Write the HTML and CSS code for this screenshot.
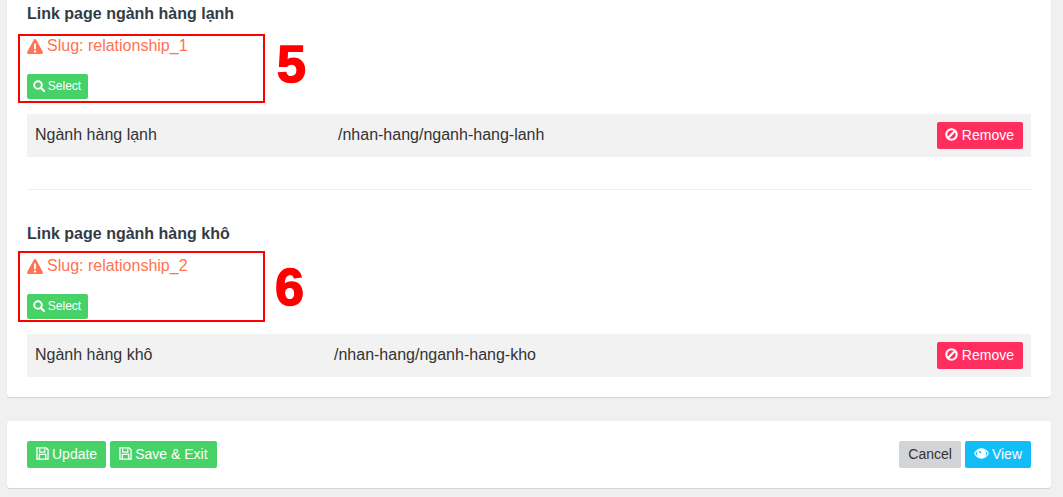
FILE: index.html
```html
<!DOCTYPE html>
<html lang="vi">
<head>
  <meta charset="UTF-8">
  <title>Link page</title>
  <link rel="stylesheet" href="styles.css">
</head>
<body>
  <svg class="icon-defs" width="0" height="0" aria-hidden="true">
    <symbol id="i-warn" viewBox="0 0 16 15"><path d="M8 0c.5 0 1 .3 1.200.7l6.600 12.200c.5.900-.1 2-1.100 2H1.300c-1 0-1.600-1.100-1.100-2L6.800.7C7 .3 7.500 0 8 0zM6.900 4.500l.2 5.700h1.800l.2-5.700H6.900zM8 11.200a1.200 1.200 0 1 0 0 2.400 1.200 1.200 0 0 0 0-2.400z" fill-rule="evenodd" fill="currentColor"/></symbol>
    <symbol id="i-search" viewBox="0 0 12 12"><circle cx="5" cy="5" r="3.800" fill="none" stroke="currentColor" stroke-width="1.900"/><path d="M7.800 7.800 11 11" stroke="currentColor" stroke-width="2.300" stroke-linecap="round"/></symbol>
    <symbol id="i-ban" viewBox="0 0 14 14"><circle cx="7" cy="7" r="5.600" fill="none" stroke="currentColor" stroke-width="2.200"/><path d="M3 11 11 3" stroke="currentColor" stroke-width="2.200"/></symbol>
    <symbol id="i-save" viewBox="0 0 14 14"><path d="M1 1h10l2 2v10H1z" fill="none" stroke="currentColor" stroke-width="1.400"/><path d="M4 1.500v4h5.500v-4" fill="none" stroke="currentColor" stroke-width="1.300"/><path d="M3.500 13V8h7v5" fill="none" stroke="currentColor" stroke-width="1.300"/></symbol>
    <symbol id="i-eye" viewBox="0 0 16 11"><path d="M8 0C4.500 0 1.700 2.200 0 5.500 1.700 8.800 4.500 11 8 11s6.300-2.200 8-5.500C14.300 2.200 11.500 0 8 0zM1.600 5.500C2.500 4 3.700 2.800 5.100 2.100a3.900 3.900 0 0 0 0 6.800C3.700 8.200 2.500 7 1.600 5.500zm9.300-3.400c1.400.7 2.600 1.900 3.500 3.400-.9 1.500-2.100 2.700-3.500 3.400a3.900 3.900 0 0 0 0-6.800zM6.600 2.700a1.200 1.200 0 1 1 0 2.400 1.200 1.200 0 0 1 0-2.400z" fill-rule="evenodd" fill="currentColor"/></symbol>
  </svg>

  <div class="page">
    <div class="card card-main">
      <section class="group">
        <h4 class="group-title">Link page ngành hàng lạnh</h4>
        <p class="slug"><svg class="ico ico-warn"><use href="#i-warn"/></svg> Slug: relationship_1</p>
        <button class="btn btn-green btn-sm"><svg class="ico ico-sm"><use href="#i-search"/></svg> Select</button>
        <div class="link-row link-row-a">
          <span>Ngành hàng lạnh</span>
          <span>/nhan-hang/nganh-hang-lanh</span>
          <button class="btn btn-red"><svg class="ico"><use href="#i-ban"/></svg> Remove</button>
        </div>
      </section>

      <hr class="divider">

      <section class="group">
        <h4 class="group-title">Link page ngành hàng khô</h4>
        <p class="slug"><svg class="ico ico-warn"><use href="#i-warn"/></svg> Slug: relationship_2</p>
        <button class="btn btn-green btn-sm"><svg class="ico ico-sm"><use href="#i-search"/></svg> Select</button>
        <div class="link-row link-row-b">
          <span>Ngành hàng khô</span>
          <span>/nhan-hang/nganh-hang-kho</span>
          <button class="btn btn-red"><svg class="ico"><use href="#i-ban"/></svg> Remove</button>
        </div>
      </section>
    </div>

    <div class="card card-actions">
      <div class="actions">
        <button class="btn btn-green"><svg class="ico"><use href="#i-save"/></svg> Update</button>
        <button class="btn btn-green"><svg class="ico"><use href="#i-save"/></svg> Save &amp; Exit</button>
      </div>
      <div class="actions">
        <button class="btn btn-grey">Cancel</button>
        <button class="btn btn-blue"><svg class="ico ico-eye"><use href="#i-eye"/></svg> View</button>
      </div>
    </div>
  </div>

  <!-- red marks drawn over the screenshot -->
  <div class="mark mark-5"></div>
  <div class="mark mark-6"></div>
  <div class="mark-num num-5">5</div>
  <div class="mark-num num-6">6</div>
</body>
</html>
```

FILE: styles.css
```css
* {
  box-sizing: border-box;
}

html, body {
  height: 497px;
  overflow: hidden;
}

body {
  margin: 0;
  background-color: #f0f0f0;
  color: #333;
  font-family: "Liberation Sans", Arial, sans-serif;
  font-size: 14px;
  position: relative;
}

.icon-defs {
  position: absolute;
}

.page {
  padding: 0 12px 0 7px;
}

.card {
  background-color: #fff;
  border-radius: 0 0 3px 3px;
  box-shadow: 0 1px 1px rgba(0, 0, 0, 0.12);
  padding: 0 20px;
}

.card-main {
  height: 397px;
  padding-top: 4px;
}

.card-actions {
  margin-top: 24px;
  height: 67px;
  border-radius: 3px;
  display: flex;
  justify-content: space-between;
  align-items: center;
}

.group-title {
  margin: 0;
  font-size: 16px;
  line-height: 20px;
  font-weight: bold;
  color: #333c45;
}

.slug {
  margin: 12px 0 0;
  height: 20px;
  font-size: 16px;
  line-height: 20px;
  color: #ff7350;
  display: flex;
  align-items: center;
  gap: 4px;
}

.btn {
  display: inline-flex;
  align-items: center;
  justify-content: center;
  gap: 3px;
  height: 27px;
  padding: 0 9px 2px;
  border: none;
  border-radius: 2px;
  color: #fff;
  font-family: inherit;
  font-size: 14px;
}

.btn-sm {
  display: flex;
  height: 25px;
  width: 61px;
  margin-top: 18px;
  padding: 0 1px 2px 0;
  gap: 3px;
  font-size: 12px;
}

.btn-green {
  background-color: #47d267;
}

.btn-red {
  background-color: #ff2e5f;
  padding: 0 9px 2px 8px;
  gap: 4px;
}

.btn-blue {
  background-color: #12bdf7;
}

.btn-grey {
  background-color: #d3d4d7;
  color: #333;
}

.ico {
  width: 13px;
  height: 13px;
  flex: none;
}

.ico-sm {
  width: 12px;
  height: 12px;
}

.ico-warn {
  width: 16px;
  height: 15px;
}

.ico-eye {
  width: 15px;
  height: 11px;
}

.link-row {
  display: grid;
  align-items: center;
  height: 43px;
  margin-top: 15px;
  padding: 0 8px;
  background-color: #f2f2f2;
  font-size: 16px;
}

.link-row span {
  padding-bottom: 2px;
}

.link-row .btn {
  justify-self: end;
}

.link-row-a {
  grid-template-columns: 303px 1fr auto;
}

.link-row-b {
  grid-template-columns: 299px 1fr auto;
}

.divider {
  margin: 32px 0 34px;
  border: none;
  border-top: 1px solid #eee;
}

.actions {
  display: flex;
  gap: 4px;
}

.mark {
  position: absolute;
  left: 18px;
  width: 247px;
  border: 2px solid #f00;
}

.mark-5 {
  top: 34px;
  height: 69px;
}

.mark-6 {
  top: 251px;
  height: 71px;
}

.mark-num {
  position: absolute;
  color: #f00;
  font-weight: bold;
  font-size: 52px;
  line-height: 60px;
  -webkit-text-stroke: 1.5px #f00;
}

.num-5 {
  left: 277px;
  top: 34px;
}

.num-6 {
  left: 275px;
  top: 257px;
}
```
